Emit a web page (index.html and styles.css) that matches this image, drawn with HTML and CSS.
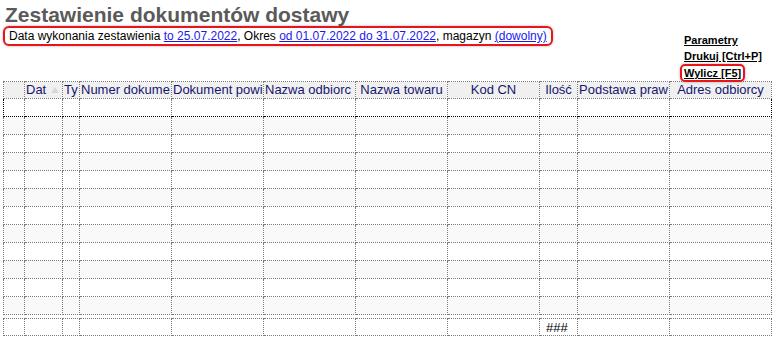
FILE: index.html
```html
<!DOCTYPE html>
<html lang="pl">
<head>
    <meta charset="UTF-8">
    <title>Zestawienie dokumentów dostawy</title>
    <link rel="stylesheet" href="styles.css">
</head>
<body>
    <div class="top">
        <div class="heading">
            <h1 class="title">Zestawienie dokumentów dostawy</h1>
            <div class="params">
                Data wykonania zestawienia <a href="#">to 25.07.2022</a>, Okres <a href="#">od 01.07.2022 do 31.07.2022</a>, magazyn <a href="#">(dowolny)</a>
            </div>
        </div>
        <div class="actions">
            <a href="#" class="action">Parametry</a>
            <a href="#" class="action">Drukuj [Ctrl+P]</a>
            <a href="#" class="action marked">Wylicz [F5]</a>
        </div>
    </div>

    <table class="grid">
        <colgroup>
            <col style="width:21px"><col style="width:38px"><col style="width:17px">
            <col style="width:92px"><col style="width:92px"><col style="width:92px">
            <col style="width:92px"><col style="width:92px"><col style="width:38px">
            <col style="width:92px"><col style="width:102px">
        </colgroup>
        <thead>
            <tr>
                <th></th>
                <th><div class="hcell left">Dat <span class="sort"></span></div></th>
                <th><div class="hcell left">Ty</div></th>
                <th><div class="hcell left">Numer dokume</div></th>
                <th><div class="hcell left">Dokument powi</div></th>
                <th><div class="hcell left">Nazwa odbiorc</div></th>
                <th><div class="hcell">Nazwa towaru</div></th>
                <th><div class="hcell">Kod CN</div></th>
                <th><div class="hcell">Ilość</div></th>
                <th><div class="hcell left">Podstawa praw</div></th>
                <th><div class="hcell">Adres odbiorcy</div></th>
            </tr>
        </thead>
        <tbody id="rows"></tbody>
    </table>

    <table class="grid totals">
        <colgroup>
            <col style="width:21px"><col style="width:38px"><col style="width:17px">
            <col style="width:92px"><col style="width:92px"><col style="width:92px">
            <col style="width:92px"><col style="width:92px"><col style="width:38px">
            <col style="width:92px"><col style="width:102px">
        </colgroup>
        <tr>
            <td></td><td></td><td></td><td></td><td></td><td></td><td></td><td></td>
            <td class="sum">###</td><td></td><td></td>
        </tr>
    </table>

    <script>
        // 12 empty rows, first one is the selected row
        const body = document.getElementById('rows');
        for (let i = 0; i < 12; i++) {
            const row = document.createElement('tr');
            if (i === 0) row.classList.add('selected');
            if (i % 2 === 1) row.classList.add('alt');
            for (let j = 0; j < 11; j++) {
                row.appendChild(document.createElement('td'));
            }
            body.appendChild(row);
        }
    </script>
</body>
</html>
```

FILE: styles.css
```css
body {
    margin: 0;
    background-color: #ffffff;
    font-family: "Liberation Sans", Arial, sans-serif;
    color: #000;
}

.top {
    display: flex;
    justify-content: space-between;
    height: 81px;
}

.title {
    margin: 3px 0 0 5px;
    font-size: 21px;
    line-height: 23px;
    font-weight: bold;
    color: #5a5a5a;
}

.params {
    display: inline-block;
    margin-left: 3px;
    padding: 0 4px;
    height: 16px;
    font-size: 12px;
    line-height: 16px;
    border: 2px solid #e8141c;
    border-radius: 6px;
    box-shadow: 0 0 3px rgba(0,0,0,0.3);
    white-space: nowrap;
}

.params a {
    color: #1a1aee;
}

.actions {
    width: 92px;
    padding-top: 32px;
    display: flex;
    flex-direction: column;
    align-items: flex-start;
}

.action {
    color: #000;
    font-size: 11px;
    font-weight: bold;
    line-height: 16px;
    white-space: nowrap;
}

.marked {
    margin-left: -4px;
    padding: 0 2px;
    line-height: 14px;
    border: 2px solid #e8141c;
    border-radius: 5px;
    box-shadow: 0 0 3px rgba(0,0,0,0.3);
}

.grid {
    margin-left: 3px;
    width: 769px;
    table-layout: fixed;
    border-collapse: collapse;
    font-size: 13px;
}

.grid th,
.grid td {
    padding: 0;
    border: 1px dotted #7a7a7a;
    overflow: hidden;
}

.grid th {
    height: 16px;
    background-color: #f0f0f0;
    color: #15156e;
    font-weight: normal;
}

.hcell {
    display: flex;
    justify-content: center;
    white-space: nowrap;
    line-height: 16px;
    padding: 0 1px;
}

.hcell.left {
    justify-content: flex-start;
}

.sort {
    width: 0;
    height: 0;
    margin: 5px 0 0 5px;
    border-left: 4px solid transparent;
    border-right: 4px solid transparent;
    border-bottom: 6px solid #d8d8d8;
}

.grid td {
    height: 17px;
}

.grid tr.alt td {
    background-color: #f9f9f9;
}

.grid tr.selected td {
    border-top-color: #000;
    border-bottom-color: #000;
}

.grid tr.selected td:first-child {
    border-left-color: #000;
}

.grid tr.selected td:last-child {
    border-right-color: #000;
}

.totals {
    margin-top: 3px;
}

.totals td {
    height: 16px;
}

.sum {
    padding-left: 6px !important;
    font-size: 13px;
    color: #000;
}
```
